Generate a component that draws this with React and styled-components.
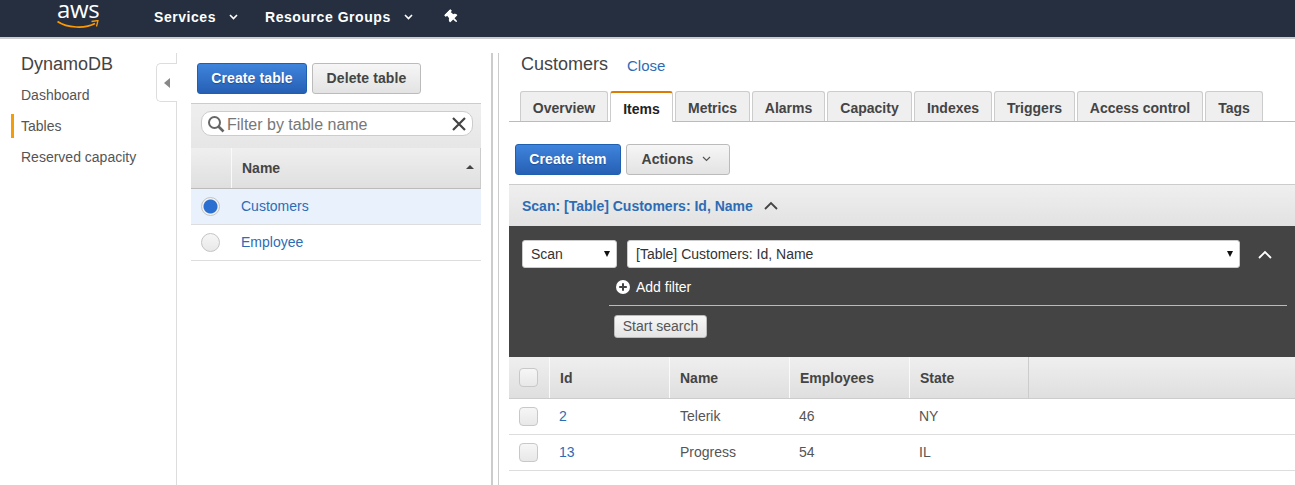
import React from "react";
import styled, { createGlobalStyle } from "styled-components";
import { FaThumbtack } from "react-icons/fa";

const Global = createGlobalStyle`
    html, body {
        margin: 0;
        height: 100%;
        overflow: hidden;
        background: #fff;
    }
    * { box-sizing: border-box; }
    body {
        font-family: "Liberation Sans", Arial, sans-serif;
        font-size: 14px;
        color: #444;
    }
`;

const TopBar = styled.header`
    height: 39px;
    background: #252f3f;
    border-bottom: 2px solid #ccc;
    display: flex;
    align-items: center;
    color: #fff;
    font-weight: bold;
    font-size: 14px;
`;

const Logo = styled.div`
    width: 154px;
    padding-left: 57px;
    display: flex;
    flex-direction: column;
    height: 37px;
`;

const LogoText = styled.span`
    font-family: "Open Sans", sans-serif;
    font-weight: 400;
    font-size: 24px;
    line-height: 18px;
    letter-spacing: -0.4px;
`;

const Smile = styled.svg`
    width: 42px;
    height: 10px;
    display: block;
    margin-top: 2px;
`;

const TopMenu = styled.div`
    display: flex;
    align-items: center;
    margin: 0 ${(p) => p.$gap}px 3px 0;
    gap: 13px;
    letter-spacing: 0.55px;
`;

const Chevron = styled.svg`
    width: ${(p) => p.$w || 9}px;
    height: ${(p) => p.$h || 6}px;
    display: block;
    fill: none;
    stroke: ${(p) => p.$color || "#fff"};
    stroke-width: ${(p) => p.$sw || 1.6};
`;

const Pin = styled(FaThumbtack)`
    width: 12px;
    height: 14px;
    margin: 0 0 3px 3px;
    transform: rotate(-45deg);
    color: #fff;
`;

const Body = styled.div`
    display: flex;
    height: 446px;
`;

const Nav = styled.aside`
    width: 177px;
    flex: none;
    margin-top: 14px;
    border-right: 1px solid #ddd;
    position: relative;
`;

const NavTitle = styled.h2`
    margin: 0;
    padding-left: 21px;
    font-weight: normal;
    font-size: 18px;
    line-height: 22px;
    color: #444;
`;

const NavList = styled.div`
    margin-top: 5px;
    display: flex;
    flex-direction: column;
`;

const NavItem = styled.div`
    height: 31px;
    line-height: 31px;
    padding-left: 21px;
    color: #555;
    position: relative;

    ${(p) => p.$active && `
        &::before {
            content: '';
            position: absolute;
            left: 11px;
            top: 3px;
            width: 3px;
            height: 24px;
            background: #f49d0c;
        }
    `}
`;

const Collapse = styled.div`
    position: absolute;
    right: -1px;
    top: 10px;
    width: 21px;
    height: 39px;
    background: #fff;
    border: 1px solid #ddd;
    border-right: none;
    border-radius: 5px 0 0 5px;
    display: flex;
    align-items: center;
    justify-content: center;

    &::after {
        content: '';
        border-style: solid;
        border-width: 5.5px 6px 5.5px 0;
        border-color: transparent #888 transparent transparent;
    }
`;

const ListPane = styled.section`
    width: 290px;
    flex: none;
    margin-left: 14px;
    margin-top: 24px;
`;

const ButtonRow = styled.div`
    display: flex;
    gap: 5px;
    padding-left: 6px;
    height: 31px;
`;

const Button = styled.div`
    height: 31px;
    width: ${(p) => p.$w}px;
    border-radius: 3px;
    display: flex;
    align-items: center;
    justify-content: center;
    gap: 8px;
    padding-bottom: 2px;
    font-weight: bold;
    letter-spacing: 0.1px;
    border: 1px solid ${(p) => (p.$primary ? "#1f5fb0" : "#bbb")};
    color: ${(p) => (p.$primary ? "#fff" : "#444")};
    background: ${(p) =>
        p.$primary
            ? "linear-gradient(#3f84dc, #2660b4)"
            : "linear-gradient(#f6f6f6, #e3e3e3)"};
    text-shadow: ${(p) => (p.$primary ? "0 1px 1px #1d4f96" : "none")};
`;

const ActionsButton = styled(Button)`
    padding-right: 4px;
`;

const FilterBar = styled.div`
    margin-top: 9px;
    height: 45px;
    border-top: 1px solid #ccc;
    background: linear-gradient(#efefef, #e6e6e6);
    padding: 7px 8px 0 10px;
`;

const FilterBox = styled.div`
    height: 25px;
    background: #fff;
    border: 1px solid #ccc;
    border-radius: 10px;
    display: flex;
    align-items: center;
    padding: 0 5px 0 5px;
    gap: 2px;
    color: #777;
    font-size: 16px;
`;

const FilterText = styled.span`
    flex: 1;
    padding-top: 2px;
`;

const ListHead = styled.div`
    display: grid;
    grid-template-columns: 40px 1fr;
    height: 41px;
    background: linear-gradient(#efefef, #dfdfdf);
    border-bottom: 1px solid #bbb;
    border-right: 1px solid #ccc;
`;

const HeadCell = styled.div`
    display: flex;
    align-items: center;
    font-weight: bold;
    color: #444;
    padding-left: 10px;
    border-left: ${(p) => (p.$sep ? "1px solid #fafafa" : "none")};
    justify-content: space-between;
`;

const SortArrow = styled.i`
    border-style: solid;
    border-width: 0 4px 4px 4px;
    border-color: transparent transparent #444 transparent;
    margin-right: 6px;
    margin-bottom: 3px;
`;

const ListRow = styled.div`
    display: grid;
    grid-template-columns: 40px 1fr;
    height: 36px;
    align-items: center;
    background: ${(p) => (p.$selected ? "#e8f1fc" : "#fff")};
    border-bottom: 1px solid #ddd;
`;

const Radio = styled.span`
    width: 19px;
    height: 19px;
    margin-left: 10px;
    border-radius: 50%;
    border: 1px solid #c4c4c4;
    background: ${(p) =>
        p.$on
            ? "radial-gradient(circle, #2b6fd0 0 6.5px, #f4f4f4 7.5px)"
            : "linear-gradient(#f6f6f6, #e8e8e8)"};
`;

const Link = styled.span`
    color: #2d6cb5;
`;

const ListLink = styled(Link)`
    padding-left: 10px;
    margin-top: -2px;
`;

const CloseLink = styled(Link)`
    font-size: 15px;
    position: relative;
    top: 1px;
`;

const Divider = styled.div`
    width: 8px;
    flex: none;
    margin: 14px 10px 0 10px;
    border-left: 2px solid #ccc;
    border-right: 1px solid #ccc;
`;

const DetailPane = styled.main`
    flex: 1;
    min-width: 0;
    margin-top: 14px;
`;

const TitleRow = styled.div`
    display: flex;
    align-items: baseline;
    padding-left: 12px;
    gap: 19px;
    height: 24px;
`;

const Title = styled.h2`
    margin: 0;
    font-weight: normal;
    font-size: 18px;
    line-height: 22px;
    color: #444;
`;

const Tabs = styled.nav`
    margin-top: 14px;
    height: 31px;
    display: flex;
    gap: 2px;
    padding-left: 11px;
    border-bottom: 1px solid #bbb;
    font-weight: bold;
`;

const Tab = styled.div`
    width: ${(p) => p.$w}px;
    height: ${(p) => (p.$active ? 31 : 30)}px;
    padding-top: 2px;
    display: flex;
    align-items: center;
    justify-content: center;
    border: 1px solid #ccc;
    border-bottom: none;
    border-radius: 3px 3px 0 0;
    background: ${(p) => (p.$active ? "#fff" : "#efefef")};
    color: ${(p) => (p.$active ? "#222" : "#444")};
    border-top: ${(p) => (p.$active ? "2px solid #dd7b00" : "1px solid #ccc")};
`;

const Toolbar = styled.div`
    display: flex;
    gap: 5px;
    padding: 22px 0 0 6px;
    height: 62px;
`;

const ScanHead = styled.div`
    height: 42px;
    border-top: 1px solid #ccc;
    background: linear-gradient(#efefef, #e2e2e2);
    display: flex;
    align-items: center;
    gap: 11px;
    padding-left: 13px;
    font-weight: bold;
`;

const ScanPanel = styled.div`
    height: 131px;
    background: #444;
    padding: 14px 8px 0 13px;
    display: flex;
    flex-direction: column;
`;

const SelectRow = styled.div`
    display: flex;
    align-items: center;
    gap: 10px;
`;

const Select = styled.div`
    width: ${(p) => p.$w}px;
    height: 28px;
    background: #fff;
    border: 1px solid #ccc;
    border-radius: 3px;
    display: flex;
    align-items: center;
    justify-content: space-between;
    padding: 0 6px 0 8px;
    color: #333;

    &::after {
        content: '';
        border-style: solid;
        border-width: 6px 3.5px 0 3.5px;
        border-color: #111 transparent transparent transparent;
    }
`;

const CollapseUp = styled.div`
    margin-left: 8px;
    display: flex;
`;

const FilterBlock = styled.div`
    margin-left: 87px;
    margin-top: 8px;
`;

const AddFilter = styled.div`
    height: 30px;
    padding: 0 0 7px 7px;
    border-bottom: 1px solid #bbb;
    display: flex;
    align-items: center;
    gap: 6px;
    color: #fff;
`;

const PlusIcon = styled.svg`
    width: 14px;
    height: 14px;
    display: block;
`;

const SearchButton = styled.div`
    width: 93px;
    height: 23px;
    margin: 9px 0 0 5px;
    padding-bottom: 1px;
    border-radius: 3px;
    border: 1px solid #bbb;
    background: linear-gradient(#f8f8f8, #e4e4e4);
    color: #555;
    display: flex;
    align-items: center;
    justify-content: center;
`;

const GRID = "40px 120px 120px 120px 120px 1fr";

const ItemHead = styled.div`
    display: grid;
    grid-template-columns: ${GRID};
    height: 42px;
    background: linear-gradient(#efefef, #dfdfdf);
    border-bottom: 1px solid #ccc;
`;

const ItemRow = styled.div`
    display: grid;
    grid-template-columns: ${GRID};
    height: 36px;
    align-items: center;
    border-bottom: 1px solid #ddd;
    color: #555;
`;

const ItemHeadCell = styled.div`
    display: flex;
    align-items: center;
    padding-left: 10px;
    font-weight: bold;
    border-left: 1px solid #fafafa;
    border-right: ${(p) => (p.$end ? "1px solid #ccc" : "none")};
`;

const CheckCell = styled.div`
    display: flex;
    align-items: center;
    padding-left: 10px;
`;

const Check = styled.span`
    width: 19px;
    height: 19px;
    border-radius: 4px;
    border: 1px solid #c8c8c8;
    background: linear-gradient(#f6f6f6, #e8e8e8);
`;

const Cell = styled.div`
    padding: 0 0 2px ${(p) => p.$pad}px;
`;

const tabs = [
    { name: "Overview", width: 88 },
    { name: "Items", width: 63 },
    { name: "Metrics", width: 75 },
    { name: "Alarms", width: 73 },
    { name: "Capacity", width: 85 },
    { name: "Indexes", width: 78 },
    { name: "Triggers", width: 81 },
    { name: "Access control", width: 126 },
    { name: "Tags", width: 58 },
];
const rows = [
    { id: 2, name: "Telerik", employees: 46, state: "NY" },
    { id: 13, name: "Progress", employees: 54, state: "IL" },
];

const Down = (props) => (
    <Chevron viewBox="0 0 9 6" {...props}>
        <path d="M1 1l3.5 3.5L8 1" />
    </Chevron>
);

const Up = ({ color }) => (
    <Chevron viewBox="0 0 14 9" $w={14} $h={9} $sw={1.8} $color={color}>
        <path d="M1 8l6-6 6 6" />
    </Chevron>
);

const App = () => {
    return (
        <>
            <Global />
            <TopBar>
                <Logo>
                    <LogoText>aws</LogoText>
                    <Smile viewBox="0 0 42 10">
                        <path d="M0.5 1.5C10 8 28 9 38 3.5" fill="none" stroke="#f90" strokeWidth="1.6" />
                        <path d="M34.5 1.5L41 0.5 39.5 6.5" fill="none" stroke="#f90" strokeWidth="1.3" />
                    </Smile>
                </Logo>
                <TopMenu $gap={27}>
                    Services <Down />
                </TopMenu>
                <TopMenu $gap={30}>
                    Resource Groups <Down />
                </TopMenu>
                <Pin />
            </TopBar>
            <Body>
                <Nav>
                    <NavTitle>DynamoDB</NavTitle>
                    <NavList>
                        <NavItem>Dashboard</NavItem>
                        <NavItem $active>Tables</NavItem>
                        <NavItem>Reserved capacity</NavItem>
                    </NavList>
                    <Collapse />
                </Nav>
                <ListPane>
                    <ButtonRow>
                        <Button $primary $w={110}>Create table</Button>
                        <Button $w={109}>Delete table</Button>
                    </ButtonRow>
                    <FilterBar>
                        <FilterBox>
                            <svg width="18" height="18" viewBox="0 0 18 18" fill="none" stroke="#666">
                                <circle cx="7.5" cy="7.5" r="5.5" strokeWidth="2" />
                                <path d="M11.5 11.5L16.5 16.5" strokeWidth="2.6" />
                            </svg>
                            <FilterText>Filter by table name</FilterText>
                            <svg width="16" height="16" viewBox="0 0 16 16" fill="none" stroke="#444" strokeWidth="2.2">
                                <path d="M2 2l12 12M14 2L2 14" />
                            </svg>
                        </FilterBox>
                    </FilterBar>
                    <ListHead>
                        <HeadCell />
                        <HeadCell $sep>
                            Name
                            <SortArrow />
                        </HeadCell>
                    </ListHead>
                    <ListRow $selected>
                        <Radio $on />
                        <ListLink>Customers</ListLink>
                    </ListRow>
                    <ListRow>
                        <Radio />
                        <ListLink>Employee</ListLink>
                    </ListRow>
                </ListPane>
                <Divider />
                <DetailPane>
                    <TitleRow>
                        <Title>Customers</Title>
                        <CloseLink>Close</CloseLink>
                    </TitleRow>
                    <Tabs>
                        {tabs.map((t) => (
                            <Tab key={t.name} $w={t.width} $active={t.name === "Items"}>{t.name}</Tab>
                        ))}
                    </Tabs>
                    <Toolbar>
                        <Button $primary $w={106}>Create item</Button>
                        <ActionsButton $w={104}>
                            Actions
                            <Down $color="#555" $sw={1.2} />
                        </ActionsButton>
                    </Toolbar>
                    <ScanHead>
                        <Link>Scan: [Table] Customers: Id, Name</Link>
                        <Up color="#444" />
                    </ScanHead>
                    <ScanPanel>
                        <SelectRow>
                            <Select $w={95}>Scan</Select>
                            <Select $w={613}>[Table] Customers: Id, Name</Select>
                            <CollapseUp><Up /></CollapseUp>
                        </SelectRow>
                        <FilterBlock>
                            <AddFilter>
                                <PlusIcon viewBox="0 0 14 14">
                                    <circle cx="7" cy="7" r="7" fill="#fff" />
                                    <path d="M7 3.2v7.6M3.2 7h7.6" stroke="#444" strokeWidth="2" />
                                </PlusIcon>
                                Add filter
                            </AddFilter>
                            <SearchButton>Start search</SearchButton>
                        </FilterBlock>
                    </ScanPanel>
                    <ItemHead>
                        <CheckCell><Check /></CheckCell>
                        <ItemHeadCell>Id</ItemHeadCell>
                        <ItemHeadCell>Name</ItemHeadCell>
                        <ItemHeadCell>Employees</ItemHeadCell>
                        <ItemHeadCell $end>State</ItemHeadCell>
                    </ItemHead>
                    {rows.map((r) => (
                        <ItemRow key={r.id}>
                            <CheckCell><Check /></CheckCell>
                            <Cell $pad={10}><Link>{r.id}</Link></Cell>
                            <Cell $pad={11}>{r.name}</Cell>
                            <Cell $pad={10}>{r.employees}</Cell>
                            <Cell $pad={10}>{r.state}</Cell>
                        </ItemRow>
                    ))}
                </DetailPane>
            </Body>
        </>
    );
};

export default App;
